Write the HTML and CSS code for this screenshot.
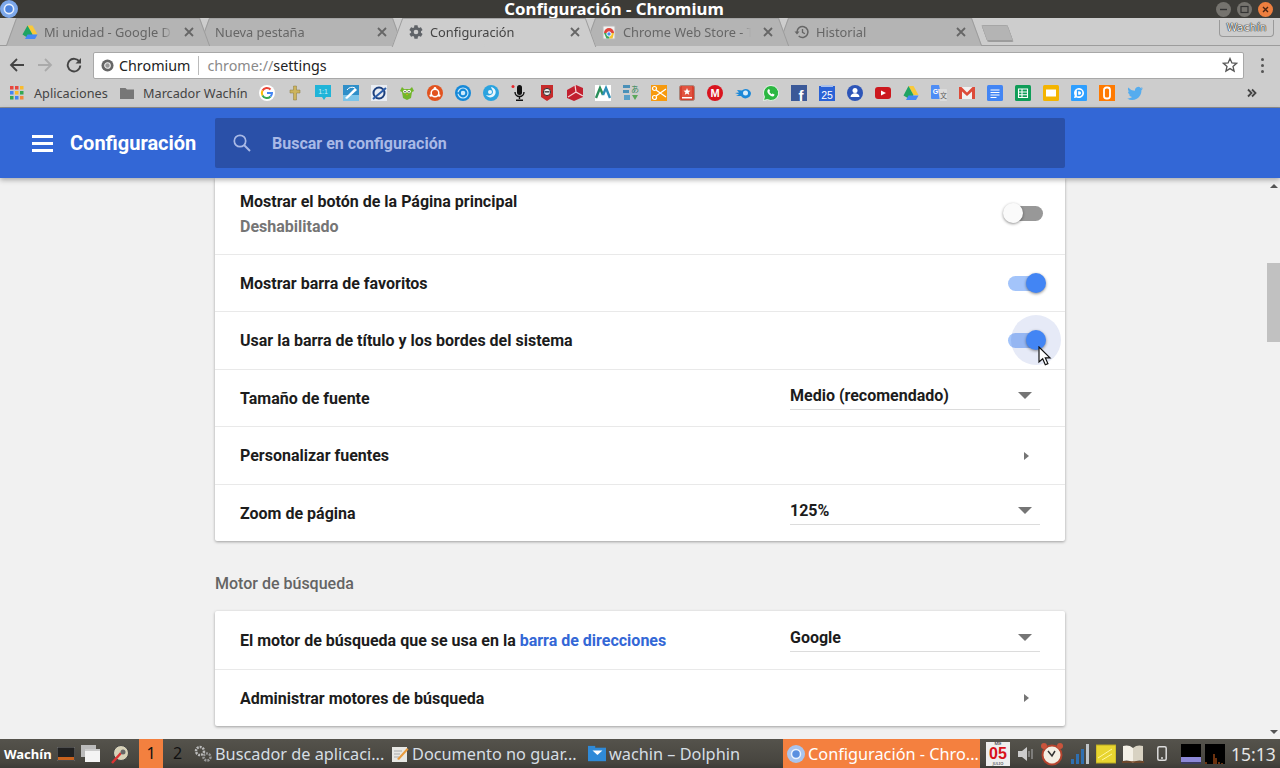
FILE: index.html
```html
<!DOCTYPE html>
<html lang="es">
<head>
  <meta charset="UTF-8" />
  <title>Configuración - Chromium</title>
  <link rel="stylesheet" href="styles.css">
</head>
<body>
  <!-- Window title -->
  <div class="titlebar">
    <svg class="title-logo" viewBox="0 0 18 18"><circle cx="9" cy="9" r="9" fill="#7da8ea"/><circle cx="9" cy="9" r="4.6" fill="#4b82dc" stroke="#e4eefc" stroke-width="1.6"/></svg>
    <div class="title-text">Configuración - Chromium</div>
    <div class="win-buttons">
      <span class="win-btn"><svg viewBox="0 0 15 15"><path d="M4 7.5h7" stroke="#333" stroke-width="1.4"/></svg></span>
      <span class="win-btn"><svg viewBox="0 0 15 15"><rect x="4" y="4.5" width="7" height="6" fill="none" stroke="#333" stroke-width="1.2"/></svg></span>
      <span class="win-btn win-close"><svg viewBox="0 0 15 15"><path d="M5 5l5 5M10 5l-5 5" stroke="#4a2412" stroke-width="1.4"/></svg></span>
    </div>
  </div>

  <!-- Tabs -->
  <div class="tabstrip">
    <div class="tab">
      <svg class="tab-icon" viewBox="0 0 16 16"><path d="M5.5 1.5h5l5 9h-5z" fill="#f8c93a"/><path d="M5.5 1.5l5 9-2.5 4.500h-0.500L0.500 10.500z" fill="#1fa463"/><path d="M3 15l2.500-4.500h10L13 15z" fill="#4688f4"/></svg>
      <span class="tab-title">Mi unidad - Google Drive</span>
      <svg class="tab-close" viewBox="0 0 10 10"><path d="M1 1l8 8M9 1l-8 8"/></svg>
    </div>
    <div class="tab">
      <span class="tab-title">Nueva pestaña</span>
      <svg class="tab-close" viewBox="0 0 10 10"><path d="M1 1l8 8M9 1l-8 8"/></svg>
    </div>
    <div class="tab tab-active">
      <svg class="tab-icon" viewBox="0 0 24 24"><path fill="#5f6368" d="M19.400 13c.04-.32.100-.66.100-1s-.06-.68-.1-1l2.100-1.650c.2-.15.250-.42.120-.64l-2-3.460c-.12-.22-.39-.3-.61-.22l-2.490 1c-.52-.4-1.080-.73-1.690-.98l-.38-2.650A.49.49 0 0 0 14 2h-4c-.25 0-.46.180-.49.420l-.38 2.650c-.61.250-1.170.59-1.690.98l-2.490-1c-.23-.09-.49 0-.61.220l-2 3.460c-.13.220-.7.490.12.640L4.570 11c-.04.320-.7.650-.07 1s.3.680.07 1l-2.110 1.650c-.19.150-.240.420-.12.640l2 3.460c.12.220.39.300.61.220l2.490-1c.52.400 1.080.730 1.690.980l.38 2.650c.03.240.240.420.490.420h4c.250 0 .460-.180.490-.420l.38-2.650c.610-.250 1.170-.590 1.690-.980l2.490 1c.230.090.490 0 .610-.220l2-3.460c.120-.220.070-.490-.120-.640zM12 15.500a3.500 3.500 0 1 1 0-7 3.500 3.500 0 0 1 0 7z"/></svg>
      <span class="tab-title">Configuración</span>
      <svg class="tab-close" viewBox="0 0 10 10"><path d="M1 1l8 8M9 1l-8 8"/></svg>
    </div>
    <div class="tab">
      <svg class="tab-icon" viewBox="0 0 16 16"><rect x="2" y="2" width="12" height="13" fill="#f2f2f2" stroke="#b9b9b9"/><path d="M3 9a5 5 0 0 1 10 0z" fill="#e0443a"/><path d="M3 9l2.500 5.500h3L8 9z" fill="#39a85a"/><path d="M8 9h5l-1.500 5.500h-3z" fill="#f6c52f"/><circle cx="8" cy="10" r="2.200" fill="#4688f4" stroke="#fff"/></svg>
      <span class="tab-title">Chrome Web Store - Tema</span>
      <svg class="tab-close" viewBox="0 0 10 10"><path d="M1 1l8 8M9 1l-8 8"/></svg>
    </div>
    <div class="tab">
      <svg class="tab-icon" viewBox="0 0 16 16"><path d="M3 8a5.500 5.500 0 1 1 1.700 4" fill="none" stroke="#666" stroke-width="1.500"/><path d="M0.500 7.500h5L3 10.500z" fill="#666"/><path d="M8.500 5v3.300l2.400 1.400" fill="none" stroke="#666" stroke-width="1.300"/></svg>
      <span class="tab-title">Historial</span>
      <svg class="tab-close" viewBox="0 0 10 10"><path d="M1 1l8 8M9 1l-8 8"/></svg>
    </div>
    <div class="new-tab"></div>
    <div class="profile-btn">Wachín</div>
  </div>

  <!-- Toolbar -->
  <div class="toolbar">
    <svg class="tool-icon" viewBox="0 0 16 16"><path d="M15 8H2M8 2L2 8l6 6" fill="none" stroke="#444" stroke-width="1.800"/></svg>
    <svg class="tool-icon" viewBox="0 0 16 16"><path d="M1 8h13M8 2l6 6-6 6" fill="none" stroke="#aaa" stroke-width="1.800"/></svg>
    <svg class="tool-icon tool-reload" viewBox="0 0 16 16"><path d="M13.500 5A6.300 6.300 0 1 0 14.300 8.500" fill="none" stroke="#444" stroke-width="1.900"/><path d="M15 1v5.500H9.500z" fill="#444"/></svg>
    <div class="omnibox">
      <svg class="omni-logo" viewBox="0 0 14 14"><circle cx="7" cy="7" r="6.500" fill="#666"/><circle cx="7" cy="7" r="3" fill="#999" stroke="#eee" stroke-width="1.200"/></svg>
      <span class="omni-site">Chromium</span>
      <span class="omni-url"><span class="omni-scheme">chrome://</span>settings</span>
      <svg class="omni-star" viewBox="0 0 16 16"><path d="M8 1.500l1.900 4.400 4.700.4-3.600 3.100 1.100 4.700L8 11.600l-4.100 2.500L5 9.400 1.400 6.300l4.700-.4z" fill="none" stroke="#555" stroke-width="1.300"/></svg>
    </div>
    <div class="tool-menu"><i></i><i></i><i></i></div>
  </div>

  <!-- Bookmarks -->
  <div class="bookmarks">
    <svg class="bm-apps" viewBox="0 0 14 14"><g><rect width="3.500" height="3.500" fill="#e8453c"/><rect x="5" width="3.500" height="3.500" fill="#e8453c"/><rect x="10" width="3.500" height="3.500" fill="#f9bb2d"/><rect y="5" width="3.500" height="3.500" fill="#4285f4"/><rect x="5" y="5" width="3.500" height="3.500" fill="#f9bb2d"/><rect x="10" y="5" width="3.500" height="3.500" fill="#34a853"/><rect y="10" width="3.500" height="3.500" fill="#34a853"/><rect x="5" y="10" width="3.500" height="3.500" fill="#4285f4"/><rect x="10" y="10" width="3.500" height="3.500" fill="#f4863c"/></g></svg>
    <span class="bm-label bm-label-apps">Aplicaciones</span>
    <svg class="bm-folder" viewBox="0 0 14 14"><path d="M0 2h5.500l1.500 1.500h7V13H0z" fill="#777"/></svg>
    <span class="bm-label bm-label-folder">Marcador Wachín</span>
    <div class="bm-icons">
      <svg viewBox="0 0 16 16"><circle cx="8" cy="8" r="8" fill="#fff"/><path d="M3.500 5.500A5 5 0 0 1 11.500 4.500" fill="none" stroke="#ea4335" stroke-width="2"/><path d="M3.500 5.500a5 5 0 0 0 0 5" fill="none" stroke="#fbbc05" stroke-width="2"/><path d="M3.500 10.500a5 5 0 0 0 8 1" fill="none" stroke="#34a853" stroke-width="2"/><path d="M8 8h5a5 5 0 0 1-1.500 3.500" fill="none" stroke="#4285f4" stroke-width="2"/></svg>
      <svg viewBox="0 0 16 16"><path d="M6.500 1h3v4H13v3H9.500v7h-3V8H3V5h3.500z" fill="#cdb45c" stroke="#8a7a3c" stroke-width=".5"/></svg>
      <svg viewBox="0 0 16 16"><path d="M0 0h16v12H11l-2 3-2-3H0z" fill="#20b4d8"/><text x="8" y="9" class="ico-text" font-size="7" fill="#c6f0fa">1:1</text></svg>
      <svg viewBox="0 0 16 16"><rect width="16" height="16" fill="#2f8fc9"/><rect y="10" width="16" height="6" fill="#7cc4e8"/><path d="M2 13L12 3l2 2L4 14z" fill="#fff"/><path d="M4 5a6 6 0 0 1 8-2" fill="none" stroke="#fff"/></svg>
      <svg viewBox="0 0 16 16"><rect width="16" height="16" fill="#e9edf4"/><circle cx="8" cy="8" r="5.500" fill="none" stroke="#1c3f7c" stroke-width="2"/><path d="M2 14L15 3" stroke="#2b5ca8" stroke-width="2"/></svg>
      <svg viewBox="0 0 16 16"><path d="M1 6L3 2l2 2h6l2-2 2 4-2 1-1 6-4 2-4-2-1-6z" fill="#71b62a"/><circle cx="6" cy="6.500" r="1.800" fill="#fff"/><circle cx="10" cy="6.500" r="1.800" fill="#fff"/><circle cx="6" cy="6.800" r=".8" fill="#333"/><circle cx="10" cy="6.800" r=".8" fill="#333"/><path d="M7 9h2l-1 1.500z" fill="#f4a21e"/></svg>
      <svg viewBox="0 0 16 16"><circle cx="8" cy="8" r="8" fill="#e2531f"/><circle cx="8" cy="8" r="3.800" fill="none" stroke="#fff" stroke-width="1.500"/><circle cx="8" cy="3.200" r="1.300" fill="#fff"/><circle cx="3.800" cy="10.500" r="1.300" fill="#fff"/><circle cx="12.200" cy="10.500" r="1.300" fill="#fff"/></svg>
      <svg viewBox="0 0 16 16"><circle cx="8" cy="8" r="8" fill="#1689d8"/><circle cx="8" cy="8" r="5" fill="none" stroke="#cdeafc" stroke-width="1.200"/><circle cx="8" cy="8" r="2.300" fill="#cdeafc"/><path d="M1 8h5" stroke="#1689d8" stroke-width="1.500"/></svg>
      <svg viewBox="0 0 16 16"><circle cx="8" cy="8" r="8" fill="#2aa3df"/><path d="M8 2c5 1 6 6 3 9-2 2-6 2-8-1 3 1 7 0 7-3 0-2-2-4-2-5z" fill="#e8f6fd"/><circle cx="7" cy="7" r="2" fill="#e8f6fd"/></svg>
      <svg viewBox="0 0 16 16"><circle cx="2" cy="1.500" r="1.500" fill="#e8262a"/><rect x="6" y="0" width="5" height="10" rx="2.500" fill="#111"/><path d="M4 7a4.500 4.500 0 0 0 9 0M8.500 12v2M5 15.200h7" fill="none" stroke="#111" stroke-width="1.400"/></svg>
      <svg viewBox="0 0 16 16"><path d="M2 0h12v12l-6 4-6-4z" fill="#c62a2a"/><circle cx="8" cy="7" r="3.600" fill="#eee" stroke="#333"/><rect x="5.500" y="6" width="5" height="1.600" fill="#555"/></svg>
      <svg viewBox="0 0 16 16"><path d="M0 5l9-5 7 3v9l-9 4-7-3z" fill="#c2202f"/><path d="M8 0l1 7 7 4M9 7L1 12" stroke="#f5d3d6" stroke-width="1.200" fill="none"/></svg>
      <svg viewBox="0 0 16 16"><rect width="16" height="16" fill="#fff"/><path d="M1 13L5 3l3 7" fill="none" stroke="#2b8f5b" stroke-width="2.400"/><path d="M8 10l3-7 4 10" fill="none" stroke="#2e8fb8" stroke-width="2.400"/></svg>
      <svg viewBox="0 0 16 16"><rect x="0" y="0" width="7" height="3" fill="#4a90b8"/><rect x="0" y="5" width="6" height="3" fill="#4a90b8"/><rect x="1" y="10" width="6" height="5" fill="#5aa0c8"/><text x="12" y="7" class="ico-text" font-size="8" fill="#3a8a5a">あ</text><path d="M9 10h6l-3 5z" fill="#5aa85a"/></svg>
      <svg viewBox="0 0 16 16"><rect width="16" height="16" fill="#f79a0e"/><circle cx="3.500" cy="3.500" r="2" fill="none" stroke="#fff" stroke-width="1.200"/><circle cx="3.500" cy="12.500" r="2" fill="none" stroke="#fff" stroke-width="1.200"/><path d="M5 5l10 7M5 11l10-7" stroke="#fff" stroke-width="1.300"/></svg>
      <svg viewBox="0 0 16 16"><rect x=".5" y=".5" width="15" height="15" rx="2" fill="#d6412f" stroke="#a8867c"/><rect x="3" y="1" width="10" height="11" fill="#e2533f"/><path d="M8 3l1 2.500 2.500.2-1.900 1.600.6 2.500L8 8.500l-2.200 1.300.6-2.500-1.900-1.600L7 5.500z" fill="#fff"/><rect x="3" y="12" width="10" height="1.500" fill="#fff"/></svg>
      <svg viewBox="0 0 16 16"><circle cx="8" cy="8" r="8" fill="#d9141e"/><text x="8" y="12" class="ico-text" font-size="11" font-weight="700" fill="#fff">M</text></svg>
      <svg viewBox="0 0 16 16"><path d="M16 8a5.500 5.500 0 0 1-10 3L1 11l3-1.500L0 8l4-.5L2 5l5 .5A5.500 5.500 0 0 1 16 8z" fill="#1c88d8"/><circle cx="10.500" cy="8" r="2.500" fill="#d8ecfa"/></svg>
      <svg viewBox="0 0 16 16"><path d="M8 .5a7.500 7.500 0 0 0-6.500 11.200L.5 15.500l3.900-1A7.500 7.500 0 1 0 8 .5z" fill="#2cb742" stroke="#fff" stroke-width=".8"/><path d="M5 4.500c-1 1-1 3 1 5s4 2.500 5 1.500l.5-1.500-2-1-1 .8-2.200-2.200.8-1-1-2z" fill="#fff"/></svg>
      <svg viewBox="0 0 16 16"><rect width="16" height="16" fill="#3b5998"/><text x="10" y="15.500" class="ico-text" font-size="15" font-weight="700" fill="#fff">f</text></svg>
      <svg viewBox="0 0 16 16"><rect y="1" width="16" height="15" fill="#2a62d6"/><rect x="2" y="0" width="12" height="2" fill="#a9c0ea"/><text x="8" y="13.500" class="ico-text" font-size="10.500" fill="#fff">25</text></svg>
      <svg viewBox="0 0 16 16"><circle cx="8" cy="8" r="8" fill="#2d55b8"/><circle cx="8" cy="5.500" r="2.500" fill="#fff"/><path d="M3.500 12c0-5 9-5 9 0z" fill="#fff"/></svg>
      <svg viewBox="0 0 16 16"><rect y="2" width="16" height="12" rx="3" fill="#cc181e"/><path d="M6 5.500L11 8l-5 2.500z" fill="#fff"/></svg>
      <svg viewBox="0 0 16 16"><path d="M5.500 1h5l5 9h-5z" fill="#f8c93a"/><path d="M5.500 1l5 9-2.500 5L.500 10.500z" fill="#1fa463"/><path d="M3 15l2.500-4.500h10L13 15z" fill="#4688f4"/></svg>
      <svg viewBox="0 0 16 16"><path d="M0 1a1 1 0 0 1 1-1h7l3 14H1a1 1 0 0 1-1-1z" fill="#4e8df5"/><path d="M7 4h8a1 1 0 0 1 1 1v10a1 1 0 0 1-1 1H9z" fill="#dcdcdc"/><text x="4.500" y="8.500" class="ico-text" font-size="7" font-weight="700" fill="#fff">G</text><text x="12.500" y="13" class="ico-text" font-size="7" fill="#666">文</text></svg>
      <svg viewBox="0 0 16 16"><rect y="2" width="16" height="12" fill="#f1f1f1"/><path d="M0 2h2.500L8 7.500 13.500 2H16v12h-3V6.500L8 11 3 6.500V14H0z" fill="#dd4b39"/></svg>
      <svg viewBox="0 0 16 16"><rect width="16" height="16" rx="1.500" fill="#4285f4"/><path d="M3.500 5h9M3.500 7.500h9M3.500 10h9M3.500 12.500h6" stroke="#fff"/></svg>
      <svg viewBox="0 0 16 16"><rect width="16" height="16" rx="1.500" fill="#0f9d58"/><path d="M3.500 4h9v8.500h-9zM3.500 7h9M3.500 9.800h9M7 4v8.500" fill="none" stroke="#fff" stroke-width="1.100"/></svg>
      <svg viewBox="0 0 16 16"><rect width="16" height="16" rx="1.500" fill="#f4b400"/><rect x="3" y="4.500" width="10" height="7" fill="#fff"/></svg>
      <svg viewBox="0 0 16 16"><rect width="16" height="16" rx="1" fill="#2e9fff"/><path d="M8 3a5 5 0 1 1-2.200 9.500L3 13l.7-2.500A5 5 0 0 1 8 3z" fill="#fff"/><path d="M6.500 5.500h1.700a2.500 2.500 0 0 1 0 5H6.500z" fill="none" stroke="#2e9fff" stroke-width="1.300"/></svg>
      <svg viewBox="0 0 16 16"><rect width="16" height="16" fill="#ff7a00"/><rect x="5" y="2.500" width="6" height="11" rx="2.500" fill="none" stroke="#fff" stroke-width="1.800"/></svg>
      <svg viewBox="0 0 16 16"><path d="M16 3.200l-1.800.6 1.400-1.700-2 .8A3.300 3.300 0 0 0 8 5.800C5.300 5.700 3 4.400 1.400 2.400c-.9 1.500-.4 3.400 1 4.400L1 6.400c0 1.600 1.100 3 2.600 3.300l-1.400.1c.4 1.300 1.600 2.200 3 2.300A6.600 6.600 0 0 1 .2 13.500 9.300 9.300 0 0 0 14.400 5.200c.7-.5 1.200-1.200 1.600-2z" fill="#55acee"/></svg>
    </div>
    <svg class="bm-more" viewBox="0 0 10 10"><path d="M1 1.500L4.500 5 1 8.500M5 1.500L8.500 5 5 8.500" fill="none" stroke="#444" stroke-width="1.800"/></svg>
  </div>

  <!-- Settings header -->
  <header class="settings-header">
    <div class="hamburger"><i></i><i></i><i></i></div>
    <div class="settings-title">Configuración</div>
    <div class="search-box">
      <svg class="search-icon" viewBox="0 0 18 18"><circle cx="7" cy="7" r="5.700" fill="none" stroke="#a9b9e6" stroke-width="1.700"/><path d="M11 11l6 6" stroke="#a9b9e6" stroke-width="2"/></svg>
      <span class="search-text">Buscar en configuración</span>
    </div>
  </header>

  <div class="main">
    <div class="content">
      <div class="card card-scrolled">
        <div class="row row-tall">
          <div class="row-label">
            <div>Mostrar el botón de la Página principal</div>
            <div class="row-sub">Deshabilitado</div>
          </div>
          <div class="toggle"><span class="knob"></span></div>
        </div>
        <div class="row">
          <div class="row-label">Mostrar barra de favoritos</div>
          <div class="toggle toggle-on"><span class="knob"></span></div>
        </div>
        <div class="row row-58">
          <div class="row-label">Usar la barra de título y los bordes del sistema</div>
          <div class="toggle toggle-on">
            <span class="ripple"></span>
            <span class="knob"></span>
            <svg class="cursor" viewBox="0 0 14 20"><path d="M1 1v15l3.700-3.300 2.600 6 2.600-1.100-2.600-5.800H12z" fill="#fff" stroke="#111" stroke-width="1.200"/></svg>
          </div>
        </div>
        <div class="row">
          <div class="row-label">Tamaño de fuente</div>
          <div class="select"><span>Medio (recomendado)</span><i class="select-arrow"></i></div>
        </div>
        <div class="row row-58">
          <div class="row-label">Personalizar fuentes</div>
          <i class="chevron"></i>
        </div>
        <div class="row row-last">
          <div class="row-label">Zoom de página</div>
          <div class="select"><span>125%</span><i class="select-arrow"></i></div>
        </div>
      </div>

      <h2 class="section-title">Motor de búsqueda</h2>

      <div class="card">
        <div class="row row-59">
          <div class="row-label">El motor de búsqueda que se usa en la <a class="link">barra de direcciones</a></div>
          <div class="select"><span>Google</span><i class="select-arrow"></i></div>
        </div>
        <div class="row row-last">
          <div class="row-label">Administrar motores de búsqueda</div>
          <i class="chevron"></i>
        </div>
      </div>
    </div>
    <div class="scrollbar">
      <i class="scroll-up"></i>
      <div class="scroll-thumb"></div>
      <i class="scroll-down"></i>
    </div>
  </div>

  <!-- Desktop panel -->
  <div class="taskbar">
    <b class="panel-user">Wachín</b>
    <svg class="panel-term" viewBox="0 0 18 14"><rect width="18" height="14" rx="1" fill="#222" stroke="#777"/><rect x="1" y="10" width="16" height="3" fill="#c8621e"/></svg>
    <svg class="panel-wins" viewBox="0 0 19 17"><rect x="0" y="0" width="15" height="12" fill="#bbb"/><rect x="4" y="4" width="15" height="13" fill="#f4f4f4"/><rect x="4" y="4" width="15" height="2" fill="#ccc"/></svg>
    <svg class="panel-tool" viewBox="0 0 20 20"><circle cx="11" cy="9" r="7.500" fill="#d8d2b8" stroke="#444"/><path d="M2 19l9-10" stroke="#d33" stroke-width="2.500"/><circle cx="13" cy="8" r="2.500" fill="#666"/></svg>
    <div class="workspace workspace-on">1</div>
    <div class="workspace">2</div>
    <div class="task">
      <svg class="task-icon" viewBox="0 0 18 18"><circle cx="6" cy="6" r="4" fill="none" stroke="#bbb" stroke-width="2.500" stroke-dasharray="2 1"/><circle cx="13" cy="12" r="3.500" fill="none" stroke="#999" stroke-width="2.500" stroke-dasharray="2 1"/></svg>
      <span>Buscador de aplicaci...</span>
    </div>
    <div class="task">
      <svg class="task-icon" viewBox="0 0 18 18"><rect x="1" y="2" width="15" height="15" fill="#e8e8e4"/><path d="M3 6h8M3 9h6M3 12h5" stroke="#aaa"/><path d="M6 14L16 3l1.500 1.500L8 15z" fill="#e89a3c"/></svg>
      <span>Documento no guar...</span>
    </div>
    <div class="task">
      <svg class="task-icon" viewBox="0 0 20 18"><rect y="2" width="20" height="15" fill="#2f8ad8"/><rect width="8" height="3" fill="#2f8ad8"/><path d="M5 5h11l-5.500 5z" fill="#fff"/></svg>
      <span>wachin – Dolphin</span>
    </div>
    <div class="task task-active">
      <svg class="task-icon" viewBox="0 0 18 18"><circle cx="9" cy="9" r="9" fill="#a9c4ee"/><circle cx="9" cy="9" r="4.500" fill="#5a8fe0" stroke="#eaf2fe" stroke-width="1.500"/></svg>
      <span>Configuración - Chro...</span>
    </div>
    <div class="tray">
      <div class="tray-date"><small>MIE</small><b>05</b><small>JULIO</small></div>
      <svg class="tray-sound" viewBox="0 0 17 18"><path d="M1 6h4l5-4v14l-5-4H1z" fill="#ccc"/><path d="M12 6v6M15 4v10" stroke="#999" stroke-width="1.300"/></svg>
      <svg class="tray-clock" viewBox="0 0 24 24"><circle cx="12" cy="13" r="9.500" fill="#f4efe4" stroke="#b5442e" stroke-width="2"/><circle cx="4" cy="4" r="3" fill="#c9543c"/><circle cx="20" cy="4" r="3" fill="#c9543c"/><path d="M8 9l4 5 3-5" fill="none" stroke="#333" stroke-width="1.500"/></svg>
      <svg class="tray-signal" viewBox="0 0 20 22"><path d="M1 16h3v5H1z" fill="#2f6fb0"/><path d="M6 11h3v10H6z" fill="#2f6fb0"/><path d="M11 6h3v15h-3z" fill="#2f6fb0"/><path d="M16 1h3v20h-3z" fill="#bfc4c8"/></svg>
      <svg class="tray-note" viewBox="0 0 20 20"><rect y="1" width="20" height="18" fill="#e8d530" stroke="#b8a820"/><path d="M2 14L16 5M6 16l10-6" stroke="#fff7a0"/></svg>
      <svg class="tray-book" viewBox="0 0 22 20"><path d="M11 4C8 1 4 1 1 2v15c3-1 7-1 10 2z" fill="#f4f0e6"/><path d="M11 4c3-3 7-3 10-2v15c-3-1-7-1-10 2z" fill="#d8d2c2"/><path d="M0 18h22" stroke="#7a4a28" stroke-width="1.500"/></svg>
      <svg class="tray-phone" viewBox="0 0 10 15"><rect x=".8" y=".8" width="8.400" height="13.400" rx="1.500" fill="none" stroke="#ddd" stroke-width="1.500"/><path d="M4 12h2" stroke="#ddd" stroke-width="1.500"/></svg>
      <div class="tray-graph tray-graph-mem"></div>
      <svg class="tray-graph" viewBox="0 0 20 20"><rect width="20" height="20" fill="#000"/><path d="M1 20v-2M9 20V10M11 20v-6M14 20v-2M17 20v-1" stroke="#d8641e"/></svg>
      <span class="tray-time">15:13</span>
    </div>
  </div>
</body>
</html>
```

FILE: styles.css
```css
* {
  margin: 0;
  padding: 0;
  box-sizing: border-box;
}
body {
  width: 1280px;
  height: 768px;
  overflow: hidden;
  display: flex;
  flex-direction: column;
  font-family: Roboto, sans-serif;
  background: #f1f1f1;
}
svg {
  display: block;
  flex: none;
}
.ico-text {
  font-family: "Liberation Sans", "Noto Sans CJK JP", sans-serif;
  text-anchor: middle;
}

/* Title bar */
.titlebar {
  height: 18px;
  flex: none;
  display: flex;
  align-items: center;
  background: #3c3b37;
}
.title-logo {
  width: 18px;
  height: 18px;
}
.title-text {
  flex: 1;
  text-align: center;
  color: #fff;
  font: 700 16.800px/18px "Noto Sans", sans-serif;
}
.win-buttons {
  width: 70px;
  display: flex;
  gap: 6px;
  padding-left: 6px;
}
.win-btn {
  width: 15px;
  height: 15px;
  border-radius: 50%;
  background: #75736e;
}
.win-close {
  background: #ee7f3f;
}

/* Tabs */
.tabstrip {
  height: 28px;
  flex: none;
  display: flex;
  padding-left: 6px;
  background: #cdcdcd;
  border-bottom: 1px solid #9c9c9c;
  font-family: "Noto Sans", sans-serif;
}
.tab {
  position: relative;
  width: 204px;
  height: 28px;
  margin-right: -11px;
  padding: 0 16px 0 16px;
  display: flex;
  align-items: center;
  gap: 6px;
  font-size: 12.800px;
  color: #666;
}
.tab:nth-child(1) { z-index: 5; }
.tab:nth-child(2) { z-index: 4; }
.tab:nth-child(4) { z-index: 3; }
.tab:nth-child(5) { z-index: 2; }
.tab-active {
  z-index: 6;
  color: #444;
}
.tab::before,
.tab::after {
  content: "";
  position: absolute;
  top: 0;
  bottom: 0;
  width: 54%;
  z-index: -1;
  background: #b4b4b4;
  border-top: 1px solid #a4a4a4;
}
.tab::before {
  left: 5px;
  transform: skewX(-20deg);
  border-left: 1px solid #9c9c9c;
}
.tab::after {
  right: 5px;
  transform: skewX(20deg);
  border-right: 1px solid #9c9c9c;
}
.tab-active::before,
.tab-active::after {
  background: #cdcdcd;
  bottom: -1px;
}
.tab-icon {
  width: 16px;
  height: 16px;
}
.tab-title {
  flex: 1;
  overflow: hidden;
  white-space: nowrap;
  -webkit-mask-image: linear-gradient(to left, transparent 0, #000 10px);
}
.tab-close {
  width: 10px;
  height: 10px;
  margin-left: 6px;
  fill: none;
  stroke: #666;
  stroke-width: 1.800px;
}
.new-tab {
  width: 27px;
  height: 17px;
  margin: 7px 0 0 13px;
  background: #b4b4b4;
  border: 1px solid #a6a6a6;
  border-bottom: 2px solid #9c9c9c;
  border-radius: 2px;
  transform: skewX(20deg);
}
.profile-btn {
  margin: 2px 6px 0 auto;
  width: 55px;
  height: 17px;
  border: 1px solid #9a9a9a;
  border-top: 0;
  border-radius: 0 0 4px 4px;
  text-align: center;
  font: 11px/16px "DejaVu Sans", sans-serif;
  color: #eee;
  text-shadow: 0 0 1px #222, 0 0 1px #222, 0 0 1px #222;
}

/* Toolbar */
.toolbar {
  height: 34px;
  flex: none;
  display: flex;
  align-items: center;
  padding: 4px 0 0 9px;
  background: #cdcdcd;
  font-family: "Noto Sans", sans-serif;
}
.tool-icon {
  width: 16px;
  height: 16px;
  margin-right: 12px;
}
.tool-reload {
  margin-left: 1px;
  margin-right: 11px;
}
.omnibox {
  width: 1151px;
  height: 27px;
  padding: 0 5px 0 7px;
  display: flex;
  align-items: center;
  background: #fff;
  border: 1px solid #a8a8a8;
  border-radius: 2px;
  font-size: 14.300px;
  color: #222;
}
.omni-logo {
  width: 13px;
  height: 13px;
  margin-right: 5px;
}
.omni-site {
  padding-right: 8px;
  border-right: 1px solid #bbb;
  line-height: 19px;
}
.omni-url {
  flex: 1;
  padding-left: 8px;
}
.omni-scheme {
  color: #8a8a8a;
}
.omni-star {
  width: 16px;
  height: 16px;
}
.tool-menu {
  margin-left: 17px;
  display: flex;
  flex-direction: column;
  gap: 3px;
}
.tool-menu i {
  width: 3px;
  height: 3px;
  background: #555;
  border-radius: 50%;
}

/* Bookmarks */
.bookmarks {
  height: 28px;
  flex: none;
  display: flex;
  align-items: center;
  padding: 0 0 1px 10px;
  background: #cdcdcd;
  border-bottom: 1px solid #8e8e8e;
  font-family: "Noto Sans", sans-serif;
  font-size: 12.700px;
  color: #444;
}
.bm-apps {
  width: 14px;
  height: 14px;
}
.bm-label-apps {
  width: 86px;
  margin-left: 10px;
}
.bm-folder {
  width: 14px;
  height: 14px;
}
.bm-label-folder {
  width: 116px;
  margin-left: 9px;
}
.bm-icons {
  display: flex;
  gap: 12px;
}
.bm-icons svg {
  width: 16px;
  height: 16px;
}
.bm-more {
  width: 10px;
  height: 10px;
  margin-left: 104px;
}

/* Settings header */
.settings-header {
  position: relative;
  z-index: 2;
  height: 70px;
  flex: none;
  display: flex;
  align-items: center;
  padding-left: 32px;
  background: #3367d6;
  box-shadow: 0 2px 5px rgba(0, 0, 0, 0.3);
}
.hamburger {
  width: 21px;
  margin-right: 17px;
  display: flex;
  flex-direction: column;
  gap: 4px;
}
.hamburger i {
  height: 3px;
  background: #fff;
}
.settings-title {
  width: 145px;
  color: #fff;
  font-size: 20px;
  font-weight: 700;
}
.search-box {
  width: 850px;
  height: 50px;
  display: flex;
  align-items: center;
  padding-left: 18px;
  background: #2a50a8;
  border-radius: 2px;
}
.search-icon {
  width: 18px;
  height: 18px;
  margin-right: 21px;
}
.search-text {
  color: #a9b9e6;
  font-size: 16px;
  font-weight: 700;
}

/* Settings content */
.main {
  flex: 1;
  min-height: 0;
  display: flex;
}
.content {
  flex: 1;
  padding-left: 215px;
  overflow: hidden;
}
.card {
  width: 850px;
  background: #fff;
  border-radius: 2px;
  box-shadow: 0 1px 3px rgba(0, 0, 0, 0.35);
}
.card-scrolled {
  border-radius: 0 0 2px 2px;
}
.row {
  height: 57px;
  display: flex;
  align-items: center;
  justify-content: space-between;
  padding-left: 25px;
  border-bottom: 1px solid #e9e9e9;
  font-size: 16px;
  font-weight: 700;
  color: #1c1c1c;
}
.row-58 {
  height: 58px;
}
.row-59 {
  height: 59px;
}
.row-tall {
  height: 77px;
  padding-bottom: 5px;
}
.row-last {
  height: 56px;
  border-bottom: 0;
}
.row-sub {
  margin-top: 6px;
  color: #757575;
}
.link {
  color: #3367d6;
}
.section-title {
  height: 70px;
  padding-top: 33px;
  font-size: 16px;
  font-weight: 500;
  color: #646464;
}

/* Toggles */
.toggle {
  position: relative;
  width: 35px;
  height: 15px;
  margin-right: 22px;
  border-radius: 8px;
  background: #989898;
}
.toggle-on {
  background: #a3c4fa;
}
.knob {
  position: absolute;
  top: -3px;
  left: -5px;
  width: 20px;
  height: 20px;
  border-radius: 50%;
  background: #fafafa;
  box-shadow: 0 1px 3px rgba(0, 0, 0, 0.45);
}
.toggle-on .knob {
  left: 18px;
  background: #4285f4;
}
.ripple {
  position: absolute;
  top: -18px;
  left: 3px;
  width: 50px;
  height: 50px;
  border-radius: 50%;
  background: rgba(50, 80, 190, 0.12);
}
.cursor {
  position: absolute;
  top: 13px;
  left: 30px;
  width: 14px;
  height: 20px;
}

/* Dropdowns */
.select {
  width: 250px;
  height: 24px;
  margin-right: 25px;
  padding-bottom: 5px;
  display: flex;
  align-items: center;
  justify-content: space-between;
  border-bottom: 1px solid #dcdcdc;
}
.select-arrow {
  margin-right: 8px;
  border-top: 7px solid #757575;
  border-left: 7px solid transparent;
  border-right: 7px solid transparent;
}
.chevron {
  margin-right: 36px;
  border-left: 5px solid #757575;
  border-top: 4.500px solid transparent;
  border-bottom: 4.500px solid transparent;
}

/* Scrollbar */
.scrollbar {
  width: 13px;
  flex: none;
  position: relative;
  background: #f1f1f1;
}
.scroll-thumb {
  position: absolute;
  top: 85px;
  width: 13px;
  height: 79px;
  background: #c1c1c1;
}
.scroll-up,
.scroll-down {
  position: absolute;
  left: 3px;
  border-left: 4px solid transparent;
  border-right: 4px solid transparent;
}
.scroll-up {
  top: 6px;
  border-bottom: 4px solid #555;
}
.scroll-down {
  bottom: 5px;
  border-top: 4px solid #555;
}

/* Desktop panel */
.taskbar {
  position: relative;
  z-index: 3;
  height: 29px;
  flex: none;
  display: flex;
  align-items: center;
  background: linear-gradient(#55534c, #47453f 80%, #3c3b37);
  font-family: "Noto Sans", sans-serif;
  color: #d6dee4;
}
.panel-user {
  width: 57px;
  padding-left: 4px;
  color: #fff;
  font-size: 13px;
}
.panel-term {
  width: 18px;
  height: 14px;
}
.panel-wins {
  width: 19px;
  height: 17px;
  margin-left: 6px;
}
.panel-tool {
  width: 20px;
  height: 20px;
  margin-left: 10px;
}
.workspace {
  width: 24px;
  height: 29px;
  text-align: center;
  font-size: 16px;
  line-height: 29px;
  color: #111;
}
.workspace-on {
  margin-left: 9px;
  background: #f3803f;
}
.workspace + .workspace {
  width: 29px;
}
.task {
  width: 197px;
  height: 29px;
  padding-left: 2px;
  display: flex;
  align-items: center;
  gap: 3px;
  font-size: 16.300px;
  white-space: nowrap;
}
.task-icon {
  width: 18px;
  height: 18px;
}
.task-active {
  background: #f4803f;
  color: #fff;
  padding-left: 4px;
}
.tray {
  flex: 1;
  display: flex;
  align-items: center;
  padding-left: 6px;
}
.tray-date {
  width: 24px;
  height: 24px;
  display: flex;
  flex-direction: column;
  align-items: center;
  background: #eee;
  color: #111;
}
.tray-date small {
  font-size: 4px;
  line-height: 4px;
}
.tray-date b {
  font: 700 16px/16px "Liberation Sans", sans-serif;
  color: #d8101a;
}
.tray-sound {
  width: 17px;
  height: 18px;
  margin-left: 7px;
}
.tray-clock {
  width: 24px;
  height: 24px;
  margin-left: 6px;
}
.tray-signal {
  width: 20px;
  height: 22px;
  margin-left: 6px;
}
.tray-note {
  width: 20px;
  height: 20px;
  margin-left: 6px;
}
.tray-book {
  width: 22px;
  height: 20px;
  margin-left: 6px;
}
.tray-phone {
  width: 10px;
  height: 15px;
  margin-left: 13px;
}
.tray-graph {
  width: 20px;
  height: 20px;
  margin-left: 4px;
}
.tray-graph-mem {
  margin-left: 14px;
  background: linear-gradient(#000 65%, #8c88d8 65%, #8c88d8 90%, #3a3a60 90%);
}
.tray-time {
  margin-left: 6px;
  font-size: 17.500px;
  color: #e6e6e6;
}
```
